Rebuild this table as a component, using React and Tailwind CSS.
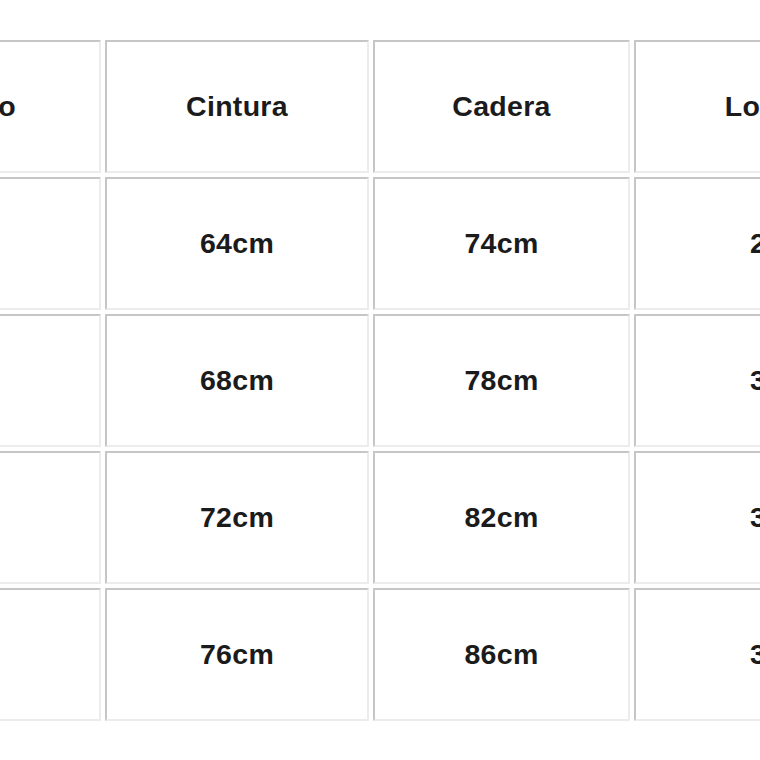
import React from 'react';

const headers = ['Tamaño', 'Cintura', 'Cadera', 'Longitud'];

const rows = [
  ['S', '64cm', '74cm', '28cm'],
  ['M', '68cm', '78cm', '30cm'],
  ['L', '72cm', '82cm', '32cm'],
  ['XL', '76cm', '86cm', '34cm'],
];

const widths = ['w-[279px]', 'w-[264px]', 'w-[257px]', 'w-[306px]'];

const Cell = ({ children, className = '' }) => {
  return (
    <td
      className={`h-[133px] border-t-2 border-l-2 border-r-2 border-b-2 border-t-[#c6c6c6] border-l-[#c6c6c6] border-r-[#ececec] border-b-[#ececec] text-center align-middle text-[28.5px] font-bold text-[#1b1b1b] tracking-[0.3px] ${className}`}
    >
      {children}
    </td>
  );
};

const SizeTable = () => {
  return (
    <table className="ml-[-182px] table-fixed border-separate border-spacing-[4px] w-[1126px]">
      <tbody>
        <tr>
          {headers.map((h, i) => (
            <Cell key={h} className={widths[i]}>
              {h}
            </Cell>
          ))}
        </tr>
        {rows.map((row, r) => (
          <tr key={r}>
            {row.map((v, i) => (
              <Cell key={i}>{v}</Cell>
            ))}
          </tr>
        ))}
      </tbody>
    </table>
  );
};

export default function App() {
  return (
    <div
      className="w-[760px] h-[760px] overflow-hidden bg-white pt-[36px]"
      style={{ fontFamily: '"Liberation Sans", Arial, sans-serif' }}
    >
      <SizeTable />
    </div>
  );
}
